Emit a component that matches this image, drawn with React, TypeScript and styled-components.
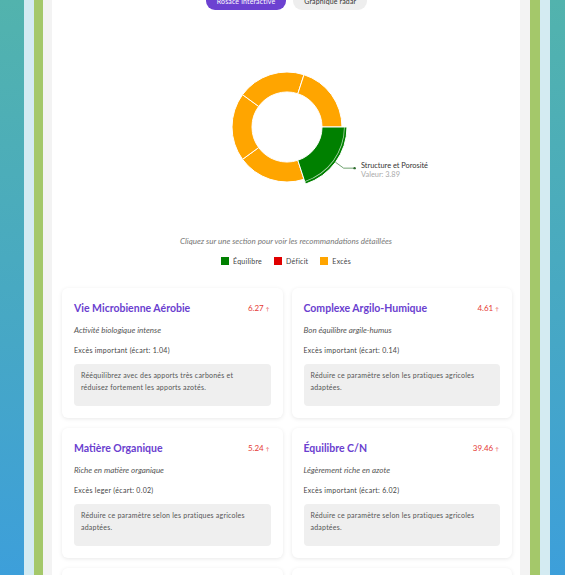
import React from "react";
import styled, { createGlobalStyle } from "styled-components";

const GlobalStyle = createGlobalStyle`
    html, body {
        margin: 0;
        padding: 0;
        height: 575px;
        overflow: hidden;
        font-family: "Lato", "Noto Sans", sans-serif;
    }
`;

const Page = styled.div`
    height: 575px;
    padding: 0 15px 0 24px;
    background: linear-gradient(180deg, #52b3ad 0%, #47a8c4 55%, #3d9fda 100%);
`;

const Frame = styled.div<{ $bg: string; $pl: number; $pr: number }>`
    height: 100%;
    box-sizing: border-box;
    padding: 0 ${(p) => p.$pr}px 0 ${(p) => p.$pl}px;
    background: ${(p) => p.$bg};
`;

const Panel = styled.div`
    height: 100%;
    background: #ffffff;
    overflow: hidden;
`;

const PillRow = styled.div`
    display: flex;
    justify-content: center;
    gap: 7px;
    margin-top: -8px;
    padding-left: 1px;
`;

const Pill = styled.button<{ $active?: boolean }>`
    height: 18px;
    padding: 0 11px;
    border: none;
    border-radius: 9px;
    font-family: "Lato", sans-serif;
    font-size: 7px;
    letter-spacing: 0.15px;
    background: ${(p) => (p.$active ? "#6c41d1" : "#eeeeee")};
    color: ${(p) => (p.$active ? "#ffffff" : "#333333")};
`;

const ChartSvg = styled.svg`
    display: block;
    width: 468px;
    height: 226px;
`;

const Caption = styled.div`
    text-align: center;
    font-size: 8px;
    line-height: 10px;
    font-style: italic;
    color: #777777;
`;

const Legend = styled.div`
    display: flex;
    justify-content: center;
    gap: 12px;
    margin-top: 10px;
`;

const LegendItem = styled.div`
    display: flex;
    align-items: center;
    gap: 4px;
    font-size: 7px;
    letter-spacing: 0.25px;
    line-height: 10px;
    color: #444444;
`;

const Swatch = styled.span<{ $color: string }>`
    width: 8px;
    height: 8px;
    background: ${(p) => p.$color};
`;

const CardGrid = styled.div`
    display: grid;
    grid-template-columns: 1fr 1fr;
    column-gap: 9px;
    row-gap: 10px;
    padding: 0 8px 0 10px;
    margin-top: 22px;
`;

const Card = styled.div`
    background: #ffffff;
    border-radius: 6px;
    box-shadow: 0 1px 4px rgba(0, 0, 0, 0.09);
    padding: 13px 12px 12px 12px;
`;

const CardHead = styled.div`
    display: flex;
    justify-content: space-between;
    align-items: center;
    height: 14px;
`;

const Title = styled.div`
    font-size: 10.5px;
    font-weight: 700;
    color: #6a40cf;
`;

const Value = styled.div`
    font-size: 8px;
    color: #e53935;
    padding-right: 1px;
`;

const Arrow = styled.span`
    font-size: 5px;
    margin-left: 2px;
`;

const Subtitle = styled.div`
    margin-top: 10px;
    font-size: 8px;
    line-height: 10px;
    font-style: italic;
    color: #555555;
`;

const Status = styled.div`
    margin-top: 10px;
    font-size: 7px;
    letter-spacing: 0.28px;
    line-height: 10px;
    color: #444444;
`;

const Advice = styled.div`
    margin-top: 9px;
    min-height: 42px;
    box-sizing: border-box;
    padding: 5px 10px 5px 7px;
    border-radius: 4px;
    background: #efefef;
    font-size: 7px;
    letter-spacing: 0.22px;
    line-height: 12px;
    color: #555555;
`;

const CX = 235;
const CY = 117;

const pt = (r: number, deg: number): [number, number] => {
    const a = (deg * Math.PI) / 180;
    return [CX + r * Math.cos(a), CY + r * Math.sin(a)];
};

const arc = (r0: number, r1: number, a0: number, a1: number): string => {
    const [x0, y0] = pt(r1, a0);
    const [x1, y1] = pt(r1, a1);
    const [x2, y2] = pt(r0, a1);
    const [x3, y3] = pt(r0, a0);
    return `M${x0},${y0} A${r1},${r1} 0 0 1 ${x1},${y1} L${x2},${y2} A${r0},${r0} 0 0 0 ${x3},${y3} Z`;
};

const segments = ["#008000", "#ffa500", "#ffa500", "#ffa500", "#ffa500"];

const cards = [
    {
        title: "Vie Microbienne Aérobie",
        value: "6.27",
        sub: "Activité biologique intense",
        status: "Excès important (écart: 1.04)",
        advice: "Rééquilibrez avec des apports très carbonés et réduisez fortement les apports azotés.",
    },
    {
        title: "Complexe Argilo-Humique",
        value: "4.61",
        sub: "Bon équilibre argile-humus",
        status: "Excès important (écart: 0.14)",
        advice: "Réduire ce paramètre selon les pratiques agricoles adaptées.",
    },
    {
        title: "Matière Organique",
        value: "5.24",
        sub: "Riche en matière organique",
        status: "Excès leger (écart: 0.02)",
        advice: "Réduire ce paramètre selon les pratiques agricoles adaptées.",
    },
    {
        title: "Équilibre C/N",
        value: "39.46",
        sub: "Légèrement riche en azote",
        status: "Excès important (écart: 6.02)",
        advice: "Réduire ce paramètre selon les pratiques agricoles adaptées.",
    },
    {
        title: "Structure et Porosité",
        value: "3.89",
        sub: "Structure équilibrée",
        status: "Équilibre (écart: 0.00)",
        advice: "Maintenir les pratiques actuelles.",
    },
    {
        title: "Activité Fongique",
        value: "4.12",
        sub: "Bonne activité fongique",
        status: "Excès leger (écart: 0.05)",
        advice: "Réduire ce paramètre selon les pratiques agricoles adaptées.",
    },
];

const Donut = (): JSX.Element => {
    const [lx0, ly0] = pt(60, 36);
    const [lx1, ly1] = pt(70, 36);
    return (
        <ChartSvg viewBox="0 0 468 226">
            {segments.map((color, i) =>
                i === 0 ? null : (
                    <path
                        key={i}
                        d={arc(35, 55, i * 72, (i + 1) * 72)}
                        fill={color}
                        stroke="#ffffff"
                        strokeWidth={1}
                    />
                ),
            )}
            <path d={arc(35, 60, 0, 72)} fill="#008000" stroke="#ffffff" strokeWidth={1} />
            <path d={arc(57, 57.8, 0, 72)} fill="#d9ecd9" opacity={0.8} />
            <polyline
                points={`${lx0},${ly0} ${lx1},${ly1} ${lx1 + 11},${ly1}`}
                fill="none"
                stroke="#4a8a4a"
                strokeWidth={0.8}
            />
            <circle cx={lx1 + 11} cy={ly1} r={1.2} fill="#2e6b2e" />
            <text x={309} y={157.5} fontSize={7.4} fill="#333333" fontFamily="Lato, sans-serif">
                Structure et Porosité
            </text>
            <text x={309} y={166.5} fontSize={7.4} fill="#aaaaaa" fontFamily="Lato, sans-serif">
                Valeur: 3.89
            </text>
        </ChartSvg>
    );
};

const App = (): JSX.Element => {
    return (
        <>
            <GlobalStyle />
            <Page>
                <Frame $bg="#d4ebf2" $pl={10} $pr={10}>
                    <Frame $bg="#a4c86a" $pl={9} $pr={10}>
                        <Frame $bg="#f3f3f3" $pl={9} $pr={10}>
                            <Panel>
                                <PillRow>
                                    <Pill $active>Rosace interactive</Pill>
                                    <Pill>Graphique radar</Pill>
                                </PillRow>
                                <Donut />
                                <Caption>
                                    Cliquez sur une section pour voir les recommandations détaillées
                                </Caption>
                                <Legend>
                                    <LegendItem>
                                        <Swatch $color="#008000" />
                                        Équilibre
                                    </LegendItem>
                                    <LegendItem>
                                        <Swatch $color="#e00000" />
                                        Déficit
                                    </LegendItem>
                                    <LegendItem>
                                        <Swatch $color="#ffa500" />
                                        Excès
                                    </LegendItem>
                                </Legend>
                                <CardGrid>
                                    {cards.map((c) => (
                                        <Card key={c.title}>
                                            <CardHead>
                                                <Title>{c.title}</Title>
                                                <Value>
                                                    {c.value}
                                                    <Arrow>↑</Arrow>
                                                </Value>
                                            </CardHead>
                                            <Subtitle>{c.sub}</Subtitle>
                                            <Status>{c.status}</Status>
                                            <Advice>{c.advice}</Advice>
                                        </Card>
                                    ))}
                                </CardGrid>
                            </Panel>
                        </Frame>
                    </Frame>
                </Frame>
            </Page>
        </>
    );
};

export default App;
